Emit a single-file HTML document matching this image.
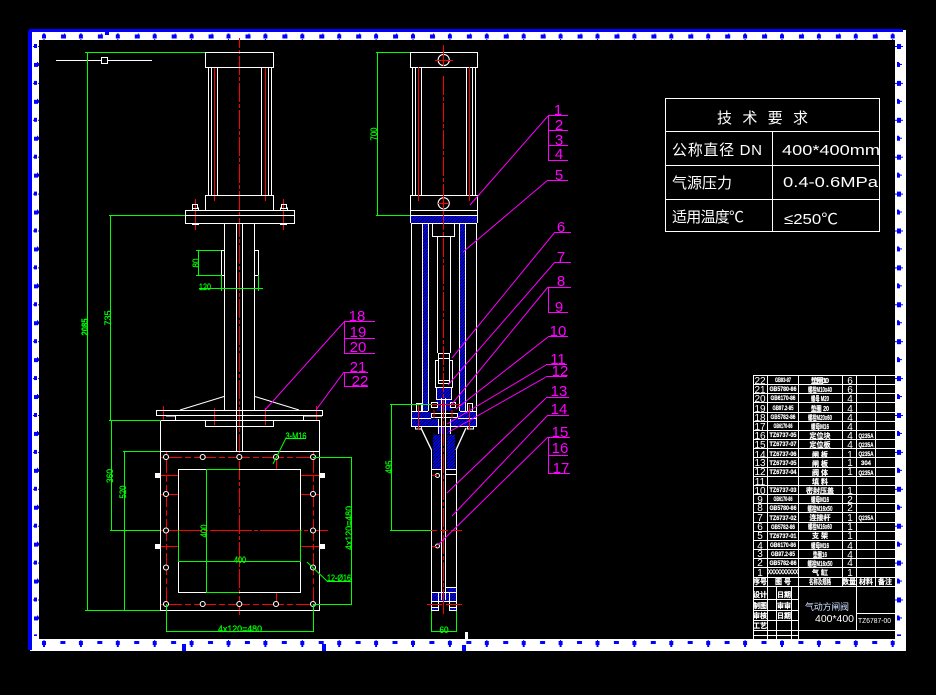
<!DOCTYPE html>
<html lang="zh">
<head>
<meta charset="utf-8">
<title>TZ6787-00</title>
<style>
html,body{margin:0;padding:0;background:#000;width:936px;height:695px;overflow:hidden}
svg{display:block}
text{font-family:"Liberation Sans","Noto Sans CJK SC",sans-serif}
.n{font-size:10px;fill:#fff;text-anchor:middle}
.c{font-size:6px;font-weight:bold;fill:#fff;stroke:#fff;stroke-width:.2;text-anchor:middle}
.m{font-size:7px;font-weight:bold;fill:#fff;stroke:#fff;stroke-width:.2;text-anchor:middle}
.g{font-size:9px;fill:#0f0;stroke:#0f0;stroke-width:.25;text-anchor:middle}
.p{font-size:15px;fill:#f0f;text-anchor:middle}
.t{font-size:15px;fill:#fff}
</style>
</head>
<body>
<svg width="936" height="695" viewBox="0 0 936 695" xmlns="http://www.w3.org/2000/svg">
<defs>
<pattern id="h" width="3" height="3" patternUnits="userSpaceOnUse">
<rect width="3" height="3" fill="#000"/>
<g fill="#00f" shape-rendering="crispEdges"><rect x="0" y="0" width="2" height="1"/><rect x="2" y="1" width="1" height="1"/><rect x="0" y="1" width="1" height="1"/><rect x="1" y="2" width="2" height="1"/></g>
</pattern>
<pattern id="top" x="42" y="33" width="36.9" height="7" patternUnits="userSpaceOnUse">
<path d="M0 1.5h1v-1h2v1h1v4H0z" fill="#00f"/><path d="M19 1.5h3v-1h1v1h1v4h-5z" fill="#00f"/><rect x="1.5" y="6" width="1" height="1" fill="#00f"/>
</pattern>
<pattern id="bot" x="42" y="638" width="36.9" height="10" patternUnits="userSpaceOnUse">
<path d="M0 3h4v4h-1v2h-2v-2H0z" fill="#00f"/><path d="M18.4 3h5v3h-5z" fill="#00f"/><rect x="1.5" y="2" width="1" height="1" fill="#00f"/>
</pattern>
<pattern id="lft" x="33" y="44" width="7" height="36.9" patternUnits="userSpaceOnUse">
<path d="M0 2h1V0h3v4H1V3H0z" fill="#00f"/><rect x="5" y="2" width="2" height="1" fill="#00f"/><path d="M1 19h3v-1h1v5H1z" fill="#00f"/><rect x="5" y="19" width="1" height="3" fill="#00f"/>
</pattern>
<pattern id="rgt" x="895" y="44" width="9" height="36.9" patternUnits="userSpaceOnUse">
<path d="M0 2h2V0h4v2h2v1H6v2H2V3H0z" fill="#00f"/><path d="M2 18h2v1h1v1h2v1H5v2H2z" fill="#00f"/>
</pattern>
</defs>
<rect width="936" height="695" fill="#000"/>

<!-- frame -->
<rect x="30" y="32" width="876" height="619" fill="#fff"/>
<rect x="903" y="30" width="3" height="2" fill="#fff"/>
<rect x="39" y="40" width="856" height="599" fill="#000"/>
<rect x="29" y="29" width="874" height="3" fill="#00f"/>
<rect x="28" y="31" width="4" height="619" fill="#00f"/>
<rect x="42" y="33" width="853" height="7" fill="url(#top)"/>
<rect x="42" y="639" width="853" height="9" fill="url(#bot)"/>
<rect x="33" y="44" width="6" height="592" fill="url(#lft)"/>
<rect x="895" y="44" width="9" height="592" fill="url(#rgt)"/>
<rect x="105" y="32" width="4" height="3" fill="#00f"/>
<rect x="182" y="644" width="4" height="7" fill="#00f"/>
<rect x="322" y="644" width="4" height="7" fill="#00f"/>
<rect x="462" y="645" width="4" height="6" fill="#00f"/>
<rect x="465" y="632" width="3" height="7" fill="#fff"/>

<!-- hatching -->
<g fill="url(#h)">
<rect x="411" y="215" width="66" height="9"/>
<rect x="422" y="224" width="6" height="187"/>
<rect x="459" y="224" width="6" height="187"/>
<rect x="437" y="387" width="15" height="24"/>
<rect x="412" y="412" width="19" height="7"/>
<rect x="458" y="412" width="19" height="7"/>
<rect x="412" y="419" width="26" height="8"/>
<rect x="450" y="419" width="27" height="8"/>
<rect x="433" y="435" width="8" height="35"/>
<rect x="447" y="435" width="8" height="35"/>
<rect x="447" y="426" width="4" height="8"/>
<rect x="447" y="587" width="9" height="6"/>
<rect x="432" y="592" width="24" height="10"/>
<rect x="432" y="607" width="6" height="3"/>
<rect x="450" y="607" width="6" height="3"/>
</g>
<rect x="439" y="426" width="4" height="8" fill="#00f"/>

<!-- red centre lines -->
<g fill="none" stroke="#f00" stroke-width="1" shape-rendering="crispEdges">
<path d="M239.5 38V617" stroke-dasharray="19 2 4 2" stroke-dashoffset="9"/>
<path d="M214.5 67V201M265.5 67V201"/>
<path d="M195.5 199V230M283.5 199V230"/>
<path d="M163.5 406V420M214.5 408V425M265.5 408V425M316.5 406V420"/>
<path d="M160 457.5H320M160 604.5H320" stroke-dasharray="22 3 6 3"/>
<path d="M166.5 451V611M313.5 451V611" stroke-dasharray="22 3 6 3"/>
<path d="M160 530.5H328" stroke-dasharray="42 2 4 2"/>
<path d="M160 475.5H178M301 475.5H319M160 494.5H178M301 494.5H319M160 546.5H178M301 546.5H319"/>
<path d="M276.5 457V469M276.5 593V604"/>
</g>

<!-- white geometry -->
<g fill="none" stroke="#fff" stroke-width="1" shape-rendering="crispEdges">
<path d="M56 60.5H101M108 60.5H152"/>
<rect x="101.5" y="57.5" width="6" height="6"/>
<!-- left view cylinder -->
<rect x="205.5" y="52.5" width="68" height="15"/>
<path d="M208.5 67V195M211.5 67V195M217.5 67V195M261.5 67V195M268.5 67V195M271.5 67V195"/>
<rect x="205.5" y="195.5" width="68" height="15"/>
<rect x="185.5" y="210.5" width="109" height="13"/>
<path d="M185 215.5H295"/>
<rect x="192.5" y="204.5" width="5" height="4"/><path d="M192.5 207.5v3M198.5 207.5v3M192 224.5h7"/>
<rect x="281.5" y="204.5" width="5" height="4"/><path d="M280.5 207.5v3M287.5 207.5v3M280 224.5h7"/>
<path d="M224.5 224V410M236.5 224V451M242.5 224V451M254.5 224V410"/>
<path d="M224 250.5H221.5V275.5H224M255 250.5H258.5V275.5H255"/>
<path d="M224 396.5L180 410M255 396.5L299 410" shape-rendering="auto"/>
<rect x="156.5" y="410.5" width="166" height="5"/>
<path d="M175.5 416V420.5M303.5 416V420.5M166 416H175M304 416H322"/>
<rect x="205.5" y="420.5" width="68" height="6"/>
<rect x="160.5" y="420.5" width="159" height="190"/>
<path d="M160 451.5H320"/>
<rect x="178.5" y="469.5" width="122" height="123"/>
<!-- right view -->
<rect x="410.5" y="52.5" width="67" height="15"/>
<path d="M412.5 67V195M415.5 67V195M421.5 67V195M466.5 67V195M472.5 67V195M475.5 67V195"/>
<rect x="410.5" y="195.5" width="67" height="15"/>
<path d="M411 215.5H477M411 223.5H477"/>
<path d="M410.5 210V223M477.5 210V223"/>
<path d="M411.5 224V412M476.5 224V412"/>
<path d="M422.5 224V411M428.5 224V411M459.5 224V411M465.5 224V411"/>
<path d="M432.5 224V236.5H454.5V224"/>
<path d="M437.5 237V353M450.5 237V353"/>
<rect x="438.5" y="353.5" width="11" height="5"/>
<path d="M435.5 360V387.5H452.5V360M435 360.5H438M450 360.5H453M438.5 358V383.5H449.5V358M438 380.5H450M438 383.5H450"/>
<path d="M436.5 388V399.5H451.5V388"/>
<path d="M412 411.5H428M460 411.5H476M412 418.5H431M458 418.5H476M412 426.5H476M411.5 411V427M476.5 411V427"/>
<path d="M431.5 402.5h6v5h-6zM450.5 402.5h5v5h-5z"/>
<path d="M431.5 413.5H457.5V417.5H431.5z"/>
<path d="M441.5 398V600M445.5 398V600M438.5 419V434M450.5 419V434"/>
<path d="M415.5 427v2h6v-2M467.5 427v2h6v-2"/>
<path d="M416.5 403.5h5v8h-5zM467.5 403.5h5v8h-5z"/>
<path d="M421 428L431.5 450M466 428L456 450" shape-rendering="auto" stroke-width="1.4"/>
<path d="M431.5 450V610.5H438.5V602M456.5 450V610.5H449.5V602"/>
<path d="M432 469.5H442M446 469.5H456M446 474.5H456M446 587.5H456M432 592.5H456M432 601.5H456M432 607.5H438M450 607.5H456"/>
<path d="M438.5 592V602M449.5 592V602"/>
</g>
<!-- lugs -->
<path d="M155 473h5v5h-5zM155 544h5v5h-5zM320 473h5v5h-5zM320 544h5v5h-5z" fill="#fff"/>

<!-- bolt holes -->
<g stroke="#fff" stroke-width="1.1" fill="#000">
<circle cx="443.7" cy="60" r="5.6"/><circle cx="443.7" cy="203.3" r="5.6"/>
<circle cx="166" cy="457" r="2.5"/><circle cx="202.7" cy="457" r="2.5"/><circle cx="239.3" cy="457" r="2.5"/><circle cx="276" cy="457" r="2.5"/><circle cx="313" cy="457" r="2.5"/>
<circle cx="166" cy="604" r="2.5"/><circle cx="202.7" cy="604" r="2.5"/><circle cx="239.3" cy="604" r="2.5"/><circle cx="276" cy="604" r="2.5"/><circle cx="313" cy="604" r="2.5"/>
<circle cx="166" cy="494" r="2.5"/><circle cx="166" cy="530.5" r="2.5"/><circle cx="166" cy="567.5" r="2.5"/>
<circle cx="313" cy="494" r="2.5"/><circle cx="313" cy="530.5" r="2.5"/><circle cx="313" cy="567.5" r="2.5"/>
<circle cx="437.5" cy="475.5" r="2"/><circle cx="437.5" cy="546" r="2"/>
</g>

<!-- red centre lines, section view -->
<g fill="none" stroke="#f00" stroke-width="1" shape-rendering="crispEdges">
<path d="M443.5 45V66"/>
<path d="M443.5 76V615" stroke-dasharray="19 2 4 2"/>
<path d="M418.5 67V201M469.5 67V201"/>
<path d="M435 60.5H453"/>
<path d="M438 203.5H449M443.5 198V209"/>
<path d="M418.5 405V430M469.5 405V430"/>
<path d="M431 404.5H461"/>
<path d="M434 410V418M452 410V418"/>
<path d="M431 530.5H462" stroke-dasharray="6 3 8 3 12"/>
<path d="M432 475.5H437M432 546.5H437"/>
<path d="M427 604.5H442M446 604.5H462M443.5 600V610"/>
</g>

<!-- green dimensions -->
<g fill="none" stroke="#0f0" stroke-width="1" shape-rendering="crispEdges">
<path d="M85 52.5H205M87.5 52V610M85 610.5H160"/>
<path d="M109 215.5H185M110.5 215V420M109 420.5H161"/>
<path d="M196 250.5H221M196 275.5H221M198.5 250V275"/>
<path d="M199 288.5H263M221.5 275V291M258.5 275V291"/>
<path d="M111.5 420V530M110 530.5H160"/>
<path d="M124.5 451V610M123 451.5H160"/>
<path d="M206.5 469V593M206 469.5H239M206 592.5H239"/>
<path d="M178.5 530V562M300.5 530V562M178 561.5H301"/>
<path d="M313 457.5H352M313 604.5H352M351.5 457V605"/>
<path d="M166.5 604V632M313.5 604V632M166 631.5H314"/>
<path d="M286 438.5H306M327 581.5H351"/>
<path d="M286 438L273 464M307 562L327 581" shape-rendering="auto"/>
<path d="M376 52.5H410M377.5 52V215M376 215.5H410"/>
<path d="M390 404.5H431M391.5 404V530M390 530.5H431"/>
<path d="M431.5 611V632M456.5 611V632M431 631.5H457"/>
</g>

<!-- magenta leaders -->
<g fill="none" stroke="#f0f" stroke-width="1">
<g shape-rendering="crispEdges">
<path d="M548.5 115.5V160.5M548 115.5H568M548 130.5H568M548 145.5H568M548 160.5H568"/>
<path d="M548 180.5H568M555 232.5H571M555 262.5H571"/>
<path d="M548.5 287V312.5M548 287.5H571M548 312.5H568"/>
<path d="M548 336.5H568M546 364.5H567M546 376.5H567M546 397.5H569M548 415.5H569"/>
<path d="M548.5 437V474M548 437.5H570M548 455.5H568M548 473.5H570"/>
<path d="M344.5 321V354M344 321.5H375M344 338.5H375M344 353.5H375"/>
<path d="M344.5 372V386.5M344 372.5H368M344 386.5H368"/>
</g>
<path d="M548 116L470 205M548 180L463 252M555 232L452 358M555 262L448 385M548 287L452 404M548 337L456 409M546 365L447 424M546 377L449 432M546 398L447 493M548 415L452 516M548 437L438 545M344 322L265 410M344 372L316 410"/>
</g>

<!-- magenta labels -->
<g class="p">
<text x="558" y="115">1</text><text x="559" y="130">2</text><text x="559" y="145">3</text><text x="559" y="159">4</text>
<text x="559" y="180">5</text><text x="561" y="232">6</text><text x="561" y="262">7</text><text x="561" y="286">8</text><text x="559" y="312">9</text>
<text x="558" y="336">10</text><text x="558" y="364">11</text><text x="560" y="376">12</text><text x="559" y="396">13</text><text x="559" y="414">14</text>
<text x="560" y="437">15</text><text x="560" y="453">16</text><text x="561" y="473">17</text>
<text x="357" y="321">18</text><text x="358" y="337">19</text><text x="358" y="352">20</text><text x="358" y="372">21</text><text x="360" y="386">22</text>
</g>

<!-- green texts -->
<g class="g">
<text transform="translate(88 327) rotate(-90)" font-weight="bold" textLength="17" lengthAdjust="spacingAndGlyphs">2085</text>
<text transform="translate(111 318) rotate(-90)" textLength="15" lengthAdjust="spacingAndGlyphs">735</text>
<text transform="translate(199 263) rotate(-90)" textLength="9" lengthAdjust="spacingAndGlyphs">80</text>
<text x="205" y="290" textLength="12" lengthAdjust="spacingAndGlyphs">120</text>
<text transform="translate(113 476) rotate(-90)" textLength="14" lengthAdjust="spacingAndGlyphs">360</text>
<text transform="translate(126 492) rotate(-90)" textLength="13" lengthAdjust="spacingAndGlyphs">520</text>
<text transform="translate(207 531) rotate(-90)" textLength="13" lengthAdjust="spacingAndGlyphs">400</text>
<text x="240" y="563" textLength="12" lengthAdjust="spacingAndGlyphs">400</text>
<text transform="translate(352 528) rotate(-90)" textLength="44" lengthAdjust="spacingAndGlyphs">4x120=480</text>
<text x="240" y="632" textLength="44" lengthAdjust="spacingAndGlyphs">4x120=480</text>
<text x="296" y="439" textLength="21" lengthAdjust="spacingAndGlyphs">3-M16</text>
<text x="339" y="581" textLength="24" lengthAdjust="spacingAndGlyphs">12-Ø16</text>
<text transform="translate(377 134) rotate(-90)" textLength="13" lengthAdjust="spacingAndGlyphs">700</text>
<text transform="translate(392 467) rotate(-90)" textLength="13" lengthAdjust="spacingAndGlyphs">495</text>
<text x="444" y="633" textLength="9" lengthAdjust="spacingAndGlyphs">60</text>
</g>

<!-- technical requirements table -->
<g fill="none" stroke="#fff" stroke-width="1" shape-rendering="crispEdges">
<rect x="665.5" y="98.5" width="214" height="133"/>
<path d="M665 131.5H880M665 165.5H880M665 199.5H880M772.5 131V232"/>
</g>
<g class="t">
<text x="717" y="123" textLength="91">技 术 要 求</text>
<text x="672" y="155" textLength="90">公称直径 DN</text>
<text x="782" y="155" textLength="98" lengthAdjust="spacingAndGlyphs">400*400mm</text>
<text x="672" y="188" textLength="60">气源压力</text>
<text x="783" y="187" textLength="95" lengthAdjust="spacingAndGlyphs">0.4-0.6MPa</text>
<text x="672" y="222" textLength="72">适用温度℃</text>
<text x="784" y="224" textLength="54" lengthAdjust="spacingAndGlyphs">≤250℃</text>
</g>

<!-- BOM table -->
<g fill="none" stroke="#fff" stroke-width="1" shape-rendering="crispEdges">
<path d="M753 375.5H895M753 384.5H895M753 393.5H895M753 402.5H895M753 412.5H895M753 421.5H895M753 430.5H895M753 439.5H895M753 448.5H895M753 457.5H895M753 467.5H895M753 476.5H895M753 485.5H895M753 494.5H895M753 503.5H895M753 512.5H895M753 522.5H895M753 531.5H895M753 540.5H895M753 549.5H895M753 558.5H895M753 567.5H895M753 577.5H895M753 586.5H895"/>
<path d="M753.5 375V639M767.5 375V639M798.5 375V639M842.5 375V586M856.5 375V630M875.5 375V586"/>
<path d="M776.5 586V639M791.5 586V639"/>
<path d="M753 599.5H798M753 610.5H798M753 620.5H798M753 630.5H895M753 635.5H798M857 613.5H895"/>
</g>
<g>
<g class="n" font-size="10">
<text x="760" y="384">22</text><text x="760" y="393">21</text><text x="760" y="402">20</text><text x="760" y="412">19</text><text x="760" y="421">18</text><text x="760" y="430">17</text><text x="760" y="439">16</text><text x="760" y="448">15</text><text x="760" y="458">14</text><text x="760" y="466">13</text><text x="760" y="475">12</text><text x="760" y="485">11</text><text x="760" y="494">10</text><text x="760" y="503">9</text><text x="760" y="511">8</text><text x="760" y="521">7</text><text x="760" y="530">6</text><text x="760" y="539">5</text><text x="760" y="549">4</text><text x="760" y="557">3</text><text x="760" y="566">2</text><text x="760" y="576">1</text>
</g>
<g class="c">
<text x="783" y="382" textLength="16" lengthAdjust="spacingAndGlyphs">GB93-87</text>
<text x="783" y="391" textLength="27" lengthAdjust="spacingAndGlyphs">GB5780-86</text>
<text x="783" y="400" textLength="25" lengthAdjust="spacingAndGlyphs">GB6170-86</text>
<text x="783" y="410" textLength="21" lengthAdjust="spacingAndGlyphs">GB97.2-85</text>
<text x="783" y="419" textLength="25" lengthAdjust="spacingAndGlyphs">GB5782-86</text>
<text x="783" y="428" textLength="19" lengthAdjust="spacingAndGlyphs">GB6170-86</text>
<text x="783" y="437" textLength="27" lengthAdjust="spacingAndGlyphs">TZ6737-05</text>
<text x="783" y="446" textLength="27" lengthAdjust="spacingAndGlyphs">TZ6737-07</text>
<text x="783" y="456" textLength="27" lengthAdjust="spacingAndGlyphs">TZ6737-06</text>
<text x="783" y="465" textLength="27" lengthAdjust="spacingAndGlyphs">TZ6737-05</text>
<text x="783" y="474" textLength="27" lengthAdjust="spacingAndGlyphs">TZ6737-04</text>
<text x="783" y="492" textLength="27" lengthAdjust="spacingAndGlyphs">TZ6737-03</text>
<text x="783" y="501" textLength="19" lengthAdjust="spacingAndGlyphs">GB6170-86</text>
<text x="783" y="510" textLength="27" lengthAdjust="spacingAndGlyphs">GB5780-86</text>
<text x="783" y="520" textLength="27" lengthAdjust="spacingAndGlyphs">TZ6737-02</text>
<text x="783" y="529" textLength="24" lengthAdjust="spacingAndGlyphs">GB5782-86</text>
<text x="783" y="538" textLength="27" lengthAdjust="spacingAndGlyphs">TZ6737-01</text>
<text x="783" y="547" textLength="26" lengthAdjust="spacingAndGlyphs">GB6170-86</text>
<text x="783" y="556" textLength="24" lengthAdjust="spacingAndGlyphs">GB97.2-85</text>
<text x="783" y="565" textLength="27" lengthAdjust="spacingAndGlyphs">GB5782-86</text>
<text x="783" y="574" textLength="30" lengthAdjust="spacingAndGlyphs">XXXXXXXXXX</text>
</g>
<g class="m">
<text x="820" y="383" textLength="18" lengthAdjust="spacing">垫圈 10</text>
<text x="820" y="392" textLength="24" lengthAdjust="spacingAndGlyphs">螺栓M10x40</text>
<text x="820" y="401" textLength="18" lengthAdjust="spacingAndGlyphs">螺母 M20</text>
<text x="820" y="411" textLength="18" lengthAdjust="spacingAndGlyphs">垫圈 20</text>
<text x="820" y="420" textLength="24" lengthAdjust="spacingAndGlyphs">螺栓M20x60</text>
<text x="820" y="429" textLength="18" lengthAdjust="spacingAndGlyphs">螺母M16</text>
<text x="820" y="438">定位块</text>
<text x="820" y="447">定位板</text>
<text x="820" y="457">闸 板</text>
<text x="820" y="466">闸 板</text>
<text x="820" y="475">阀 体</text>
<text x="820" y="484">填 料</text>
<text x="820" y="493">密封压盖</text>
<text x="820" y="502" textLength="18" lengthAdjust="spacingAndGlyphs">螺母M16</text>
<text x="820" y="511" textLength="25" lengthAdjust="spacingAndGlyphs">螺栓M16x50</text>
<text x="820" y="520">连接杆</text>
<text x="820" y="529" textLength="24" lengthAdjust="spacingAndGlyphs">螺栓M16x60</text>
<text x="820" y="538">支 架</text>
<text x="820" y="548" textLength="18" lengthAdjust="spacingAndGlyphs">螺母M16</text>
<text x="820" y="557" textLength="14" lengthAdjust="spacingAndGlyphs">垫圈16</text>
<text x="820" y="566" textLength="25" lengthAdjust="spacingAndGlyphs">螺栓M16x50</text>
<text x="820" y="575">气 缸</text>
<text x="760" y="584">序号</text>
<text x="783" y="584">图 号</text>
<text x="820" y="584" textLength="22" lengthAdjust="spacingAndGlyphs">名称及规格</text>
<text x="849" y="584">数量</text>
<text x="866" y="584">材料</text>
<text x="885" y="584">备注</text>
<text x="760" y="597">设计</text>
<text x="784" y="597">日期</text>
<text x="760" y="608">制图</text>
<text x="784" y="608">审审</text>
<text x="760" y="618">审核</text>
<text x="784" y="618">日期</text>
<text x="760" y="628">工艺</text>
</g>
<g class="n">
<text x="850" y="384">6</text><text x="850" y="393">6</text><text x="850" y="402">4</text><text x="850" y="412">4</text><text x="850" y="421">4</text><text x="850" y="430">4</text><text x="850" y="439">4</text><text x="850" y="448">4</text><text x="850" y="458">1</text><text x="850" y="466">1</text><text x="850" y="475">1</text><text x="850" y="494">1</text><text x="850" y="503">2</text><text x="850" y="511">2</text><text x="850" y="521">1</text><text x="850" y="530">1</text><text x="850" y="539">1</text><text x="850" y="549">4</text><text x="850" y="558">4</text><text x="850" y="566">4</text><text x="850" y="576">1</text>
</g>
<g class="c">
<text x="866" y="438" textLength="15" lengthAdjust="spacingAndGlyphs">Q235A</text>
<text x="866" y="447" textLength="15" lengthAdjust="spacingAndGlyphs">Q235A</text>
<text x="866" y="456" textLength="15" lengthAdjust="spacingAndGlyphs">Q235A</text>
<text x="866" y="465" textLength="10" lengthAdjust="spacingAndGlyphs">304</text>
<text x="866" y="475" textLength="15" lengthAdjust="spacingAndGlyphs">Q235A</text>
<text x="866" y="520" textLength="15" lengthAdjust="spacingAndGlyphs">Q235A</text>
</g>
<text x="805" y="610" font-size="9" fill="#cfe0ff" textLength="44">气动方闸阀</text>
<text x="815" y="622" font-size="10" fill="#fff" textLength="39" lengthAdjust="spacingAndGlyphs">400*400</text>
<text x="858" y="623" font-size="7" fill="#fff" textLength="33" lengthAdjust="spacingAndGlyphs">TZ6787-00</text>
</g>
</svg>
</body>
</html>
